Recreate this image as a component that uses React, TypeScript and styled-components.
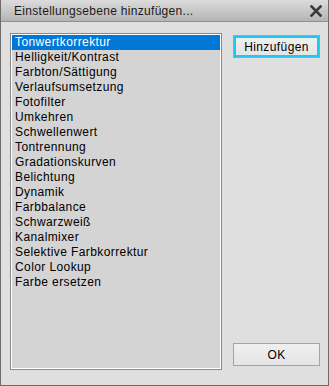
import styled, { createGlobalStyle } from 'styled-components';

const GlobalStyle = createGlobalStyle`
  html, body {
    margin: 0;
    padding: 0;
    background: #dfdfdf;
  }
  * {
    box-sizing: border-box;
  }
`;

const Dialog = styled.div`
  width: 329px;
  height: 386px;
  display: flex;
  flex-direction: column;
  background: #dfdfdf;
  border: 1px solid #6b6b6b;
  border-top: none;
  font-family: 'Liberation Sans', Arial, sans-serif;
  font-size: 12px;
  letter-spacing: 0.4px;
  color: #000;
`;

const TitleBar = styled.div`
  height: 22px;
  flex: none;
  display: flex;
  align-items: center;
  justify-content: space-between;
  padding: 0 3px 0 13px;
  background: linear-gradient(#dcdcdc, #b4b4b4);
  border-bottom: 1px solid #8f8f8f;
`;

const Title = styled.span`
  font-size: 12px;
  letter-spacing: 0.3px;
  color: #1a1a1a;
`;

const CloseButton = styled.button`
  width: 18px;
  height: 18px;
  padding: 0;
  border: none;
  background: transparent;
  display: flex;
  align-items: center;
  justify-content: center;
`;

const Body = styled.div`
  flex: 1;
  display: flex;
  gap: 11px;
  padding: 11px 8px 15px 9px;
`;

const ListBox = styled.ul`
  width: 212px;
  margin: 0;
  padding: 1px 1px;
  list-style: none;
  background: #d4d4d4;
  border: 1px solid #8a8a8a;
  box-shadow: inset 0 0 0 1px #ffffff;
`;

const ListItem = styled.li<{ $selected?: boolean }>`
  height: 15px;
  line-height: 15px;
  padding-left: 3px;
  white-space: nowrap;
  background: ${(p) => (p.$selected ? '#0078d7' : 'transparent')};
  color: ${(p) => (p.$selected ? '#ffffff' : '#000000')};
`;

const ButtonColumn = styled.div`
  width: 87px;
  display: flex;
  flex-direction: column;
  justify-content: space-between;
  padding-top: 2px;
  padding-bottom: 4px;
`;

const Button = styled.button<{ $focused?: boolean }>`
  height: 23px;
  width: 87px;
  padding: 0;
  font-family: 'Liberation Sans', Arial, sans-serif;
  font-size: 12px;
  letter-spacing: 0.4px;
  color: #000;
  background: linear-gradient(#f0f0f0, #e4e4e4);
  border: 1px solid #a3a3a3;
  box-shadow: ${(p) => (p.$focused ? 'inset 0 0 0 2px #1fc8f0' : 'none')};
`;

const items = [
  'Tonwertkorrektur',
  'Helligkeit/Kontrast',
  'Farbton/Sättigung',
  'Verlaufsumsetzung',
  'Fotofilter',
  'Umkehren',
  'Schwellenwert',
  'Tontrennung',
  'Gradationskurven',
  'Belichtung',
  'Dynamik',
  'Farbbalance',
  'Schwarzweiß',
  'Kanalmixer',
  'Selektive Farbkorrektur',
  'Color Lookup',
  'Farbe ersetzen',
];

const App = () => (
  <>
    <GlobalStyle />
    <Dialog>
      <TitleBar>
        <Title>Einstellungsebene hinzufügen...</Title>
        <CloseButton aria-label="Schließen">
          <svg width="12" height="12" viewBox="0 0 12 12">
            <path d="M1.5 1.5 L10.5 10.5 M10.5 1.5 L1.5 10.5" stroke="#3a3a3a" strokeWidth="2.6" strokeLinecap="square" />
          </svg>
        </CloseButton>
      </TitleBar>
      <Body>
        <ListBox>
          {items.map((item, i) => (
            <ListItem key={item} $selected={i === 0}>
              {item}
            </ListItem>
          ))}
        </ListBox>
        <ButtonColumn>
          <Button $focused>Hinzufügen</Button>
          <Button>OK</Button>
        </ButtonColumn>
      </Body>
    </Dialog>
  </>
);

export default App;
